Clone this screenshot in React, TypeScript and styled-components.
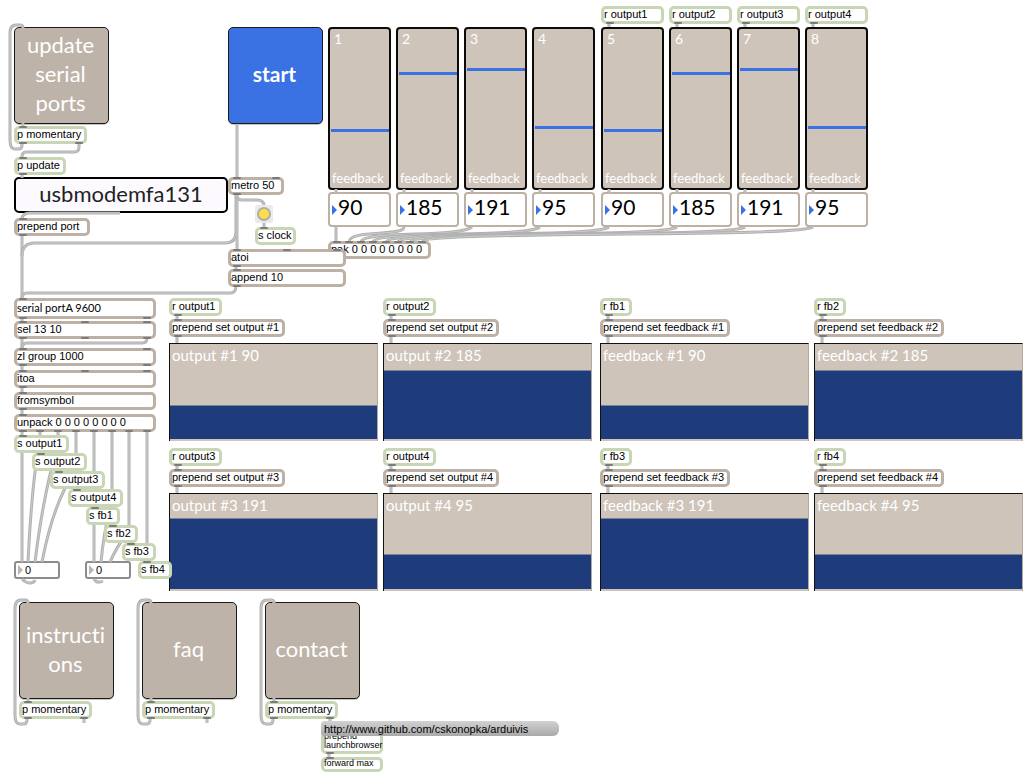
import React from "react";
import styled, { createGlobalStyle } from "styled-components";

const GlobalStyle = createGlobalStyle`
  *, *::before, *::after { box-sizing: border-box; }
  body { margin: 0; background: #fff; }
  button, input, select { font: inherit; margin: 0; }
`;

const color = {
  green: "#c9d6b5",
  taupe: "#bdb0a5",
  panel: "#cec4ba",
  button: "#beb3a9",
  blue: "#3a72e3",
  navy: "#1e3b7c",
  port: "#7b7b7b",
};

const objectFont = `"Liberation Sans", Arial, sans-serif`;
const displayFont = `Lato, "Open Sans", sans-serif`;

/* ---------- page ---------- */

const Patcher = styled.main`
  position: relative;
  display: flex;
  flex-direction: column;
  gap: 11px;
  min-height: 100vh;
  padding: 6px 9px 10px 14px;
  overflow: hidden;
  font-family: ${objectFont};
  font-size: 11px;
  font-variant-ligatures: none;
  color: #000;
`;

const Cables = styled.svg`
  position: absolute;
  top: 0;
  left: 0;
  width: 100%;
  height: 100%;
  fill: none;
  pointer-events: none;
`;

const Row = styled.section<{ $gap?: number; $indent?: number }>`
  display: flex;
  align-items: flex-start;
  gap: ${(p) => p.$gap ?? 0}px;
  padding-left: ${(p) => p.$indent ?? 0}px;
`;

const Stack = styled.div<{ $gap?: number; $indent?: number }>`
  display: flex;
  flex-direction: column;
  align-items: flex-start;
  gap: ${(p) => p.$gap ?? 0}px;
  margin-left: ${(p) => p.$indent ?? 0}px;
`;

/* ---------- object boxes ---------- */

const ObjectBox = styled.div<{ $w: number; $h: number; $tone: string }>`
  position: relative;
  display: flex;
  flex: none;
  align-items: center;
  width: ${(p) => p.$w}px;
  height: ${(p) => p.$h}px;
  padding-bottom: 2px;
  border: 3px solid ${(p) => p.$tone};
  border-radius: 5px;
  background: #fff;
  white-space: nowrap;
  line-height: 12px;
`;

const Port = styled.i<{ $at: number; $side: "in" | "out" }>`
  position: absolute;
  left: ${(p) => p.$at - 3}px;
  ${(p) => (p.$side === "in" ? "top: -3px;" : "bottom: -3px;")}
  width: 8px;
  height: 2px;
  border-radius: 1px;
  background: ${color.port};
`;

const WideText = styled.span`
  font-family: ${displayFont};
  font-size: 11px;
`;

type ObjProps = {
  w: number;
  h?: number;
  tone?: string;
  ins?: number[];
  outs?: number[];
  children: React.ReactNode;
};

function Obj({ w, h = 18, tone = color.taupe, ins = [5], outs = [5], children }: ObjProps) {
  return (
    <ObjectBox $w={w} $h={h} $tone={tone}>
      {children}
      {ins.map((at) => (
        <Port key={`i${at}`} $at={at} $side="in" />
      ))}
      {outs.map((at) => (
        <Port key={`o${at}`} $at={at} $side="out" />
      ))}
    </ObjectBox>
  );
}

/* ---------- text buttons ---------- */

const TextButton = styled.button<{ $active?: boolean }>`
  display: block;
  width: 95px;
  height: 97px;
  padding: 0 8px 4px 6px;
  border: 1px solid #1c1a19;
  border-radius: 5px;
  background: ${(p) => (p.$active ? color.blue : color.button)};
  box-shadow: 0 1px 0 #c4c4c4;
  color: #fff;
  font-family: ${displayFont};
  font-size: ${(p) => (p.$active ? 21 : 22)}px;
  font-weight: ${(p) => (p.$active ? 700 : 400)};
  line-height: 29px;
  text-align: center;
  overflow-wrap: anywhere;
`;

const MomentaryStack = styled(Stack)`
  width: 95px;
`;

function MomentaryButton({ label }: { label: string }) {
  return (
    <MomentaryStack $gap={2}>
      <TextButton type="button">{label}</TextButton>
      <Obj w={73} tone={color.green} outs={[5, 61]}>
        p momentary
      </Obj>
    </MomentaryStack>
  );
}

/* ---------- serial port and clock columns ---------- */

const PortColumn = styled.div`
  display: flex;
  flex: none;
  flex-direction: column;
  align-items: flex-start;
  gap: 13px;
  width: 214px;
  padding-top: 21px;
`;

const PortMenu = styled.select`
  display: block;
  width: 214px;
  height: 36px;
  padding: 0 0 2px;
  appearance: none;
  border: 2px solid #000;
  border-radius: 5px;
  background: #fdfaff;
  color: #222;
  font-family: ${displayFont};
  font-size: 22px;
  line-height: 30px;
  text-align: center;
  text-align-last: center;
`;

const ClockColumn = styled.div`
  position: relative;
  z-index: 1;
  display: flex;
  flex: none;
  flex-direction: column;
  align-items: flex-start;
  gap: 53px;
  width: 100px;
  padding-top: 21px;
`;

const BangButton = styled.button`
  display: flex;
  align-items: center;
  justify-content: center;
  width: 18px;
  height: 18px;
  padding: 0;
  border: 0;
  border-radius: 2px;
  background: #ebebeb;

  &::before {
    content: "";
    width: 14px;
    height: 14px;
    border: 2px solid #adadad;
    border-radius: 50%;
    background: #ffdf45;
  }
`;

const ClockBody = styled(Stack)`
  gap: 4px;
`;

/* ---------- slider channels ---------- */

const Channels = styled.div`
  display: flex;
  flex-direction: column;
  gap: 14px;
`;

const Banks = styled.div`
  display: flex;
  align-items: flex-end;
  gap: 6px;
`;

const Bank = styled.div`
  display: flex;
  gap: 5px;
`;

const Channel = styled.div`
  display: flex;
  flex-direction: column;
  gap: 3px;
  width: 63px;
`;

const Fader = styled.label`
  display: grid;
  height: 163px;
  border: 2px solid #0d0b0a;
  border-radius: 4px;
  background: ${color.panel};
  color: #fff;
  font-family: ${displayFont};
`;

const FaderName = styled.span`
  grid-area: 1 / 1;
  align-self: start;
  padding: 1px 4px;
  font-size: 14px;
  line-height: 18px;
`;

const FaderCaption = styled.span`
  grid-area: 1 / 1;
  align-self: end;
  padding: 0 2px 2px;
  font-size: 13px;
  line-height: 16px;
`;

const FaderInput = styled.input`
  grid-area: 1 / 1;
  justify-self: stretch;
  width: 58px;
  height: 156px;
  margin: 1px 0 0 1px;
  appearance: none;
  background: transparent;
  writing-mode: vertical-lr;
  direction: rtl;

  &::-webkit-slider-runnable-track {
    width: 58px;
  }
  &::-webkit-slider-thumb {
    appearance: none;
    width: 58px;
    height: 3px;
    border-radius: 0;
    background: ${color.blue};
  }
`;

const NumberField = styled.label`
  display: flex;
  align-items: center;
  gap: 1px;
  height: 35px;
  padding-left: 2px;
  border: 2px solid ${color.taupe};
  border-radius: 4px;
  background: #fff;
`;

const Arrow = styled.i<{ $tone: string }>`
  flex: none;
  border: 5px solid transparent;
  border-left-color: ${(p) => p.$tone};
  border-right-width: 0;
`;

const NumberInput = styled.input<{ $big?: boolean }>`
  flex: 1;
  min-width: 0;
  width: 100%;
  padding: 0 0 ${(p) => (p.$big ? 6 : 1)}px;
  border: 0;
  outline: 0;
  background: transparent;
  font-family: ${(p) => (p.$big ? displayFont : objectFont)};
  font-size: ${(p) => (p.$big ? 21 : 11)}px;
  color: #000;
`;

function ChannelStrip({ index, value, source }: { index: number; value: number; source?: string }) {
  return (
    <Channel>
      {source && (
        <Obj w={63} tone={color.green} ins={[]}>
          r {source}
        </Obj>
      )}
      <Stack as="div" $gap={2} style={undefined}>
        <Fader>
          <FaderName>{index}</FaderName>
          <FaderInput type="range" min={0} max={255} defaultValue={value} />
          <FaderCaption>feedback</FaderCaption>
        </Fader>
        <NumberField>
          <Arrow $tone={color.blue} />
          <NumberInput $big defaultValue={value} aria-label={`channel ${index} value`} />
        </NumberField>
      </Stack>
    </Channel>
  );
}

/* ---------- parser column ---------- */

const ParserColumn = styled(Stack)`
  flex: none;
  width: 155px;
`;

const SmallNumber = styled.label`
  display: flex;
  flex: none;
  align-items: center;
  gap: 2px;
  width: 46px;
  height: 18px;
  padding: 0 2px;
  border: 2px solid #8c8c8c;
  border-radius: 3px;
  background: #fff;
`;

/* ---------- level monitors ---------- */

const MonitorGrid = styled.div`
  display: grid;
  grid-template-columns: 209px 209px;
  gap: 7px 5px;
`;

const MonitorColumn = styled.section`
  display: flex;
  flex-direction: column;
  align-items: flex-start;
  gap: 3px;
`;

const Level = styled.div`
  display: grid;
  width: 209px;
  height: 98px;
  margin-top: 3px;
  padding-bottom: 2px;
  border: 1px solid #b3a99f;
  border-top-color: #111;
  border-left-color: #111;
  border-bottom: 0;
  background: ${color.panel};
`;

const LevelFill = styled.div`
  grid-area: 1 / 1;
  align-self: end;
  border-top: 1px solid #7c8296;
  background: ${color.navy};
`;

const LevelText = styled.span`
  grid-area: 1 / 1;
  padding: 2px;
  color: #fff;
  font-family: ${displayFont};
  font-size: 15px;
  line-height: 18px;
`;

type MonitorProps = { source: string; target: string; value: number; wide?: boolean };

function Monitor({ source, target, value, wide }: MonitorProps) {
  return (
    <MonitorColumn>
      <Obj w={wide ? 32 : 53} tone={color.green} ins={[]}>
        r {source}
      </Obj>
      <Obj w={wide ? 130 : 116}>prepend set {target}</Obj>
      <Level>
        <LevelFill style={{ height: `${(value / 255) * 100}%` }} />
        <LevelText>
          {target} {value}
        </LevelText>
      </Level>
    </MonitorColumn>
  );
}

/* ---------- link message and launcher ---------- */

const Launcher = styled.div`
  position: relative;
  display: flex;
  flex-direction: column;
  gap: 3px;
  margin-left: 56px;
`;

const LinkMessage = styled.a`
  position: absolute;
  top: -9px;
  left: 0;
  width: 238px;
  height: 15px;
  padding: 1px 3px 0;
  border-radius: 4px 6px 6px 4px;
  overflow: hidden;
  background: linear-gradient(#d2d2d2, #a9a9a9);
  color: #000;
  font-size: 11px;
  line-height: 14px;
  text-decoration: none;
`;

const SmallText = styled.span`
  font-size: 9px;
  line-height: 9px;
`;

/* ---------- cables ---------- */

const values = [90, 185, 191, 95];

const loop = (x: number, y: number) =>
  `M${x + 8} ${y + 117} v1 q0 4 -4 4 h-3 q-5 0 -5 -9 V${y + 6} q0 -8 6 -8 h4 q3 0 3 3`;

const packCables = [404, 472, 540, 609, 677, 745, 813].map((x, i) => {
  const end = [349, 361, 373, 386, 398, 410, 422][i];
  return i < 1
    ? `M${x} 227 C${x} 237 ${end} 229 ${end} 242`
    : `M${x} 227 C${x - 14} 238 ${end + 2} 230 ${end} 242`;
});

const cables = [
  loop(14, 27),
  loop(19, 602),
  loop(142, 602),
  loop(265, 602),
  "M23 123 V127",
  "M28 698 V702",
  "M151 698 V702",
  "M274 698 V702",
  "M84 718 V723",
  "M207 718 V723",
  "M330 718 V723",
  "M79 143 v4 q0 5 -5 5 H26 q-4 0 -4 5",
  "M22 174 V178",
  "M120 213 H30 q-8 0 -8 6",
  "M22 235 V299",
  "M237 124 V178",
  "M236 194 V232 q0 11 -11 11 H35 q-13 0 -13 13",
  "M237 194 V250",
  "M237 195 q0 5 5 5 h15 q7 0 7 6",
  "M264 222 V228",
  "M236 266 V270",
  "M236 286 q0 7 -6 7 H27 q-5 0 -5 5",
  "M22 318 V322",
  "M22 338 V349",
  "M147 338 q0 5 -5 5 H27 q-5 0 -5 5",
  "M22 365 V371",
  "M22 387 V393",
  "M22 409 V416",
  "M22 432 V562",
  "M40 432 V440 Q32 480 28 562",
  "M58 432 V445 Q44 490 35 562",
  "M76 432 V470 Q54 500 42 562",
  "M94 432 V562",
  "M112 432 V500 Q104 530 101 562",
  "M129 432 V530 Q116 548 110 562",
  "M147 432 V563",
  "M22 579 q4 4 8 4 q4 0 5 -3",
  "M94 579 q3 5 9 2",
  "M336 189 V193 M404 189 V193 M472 189 V193 M540 189 V193",
  "M609 189 V193 M677 189 V193 M745 189 V193 M813 189 V193",
  "M609 23 V27 M677 23 V27 M745 23 V27 M813 23 V27",
  "M336 227 V242",
  ...packCables,
  ...[177, 391, 608, 822].flatMap((x) =>
    [0, 150].map((dy) => `M${x} ${315 + dy} V${320 + dy} M${x} ${336 + dy} V${343 + dy}`)
  ),
  "M329 753 V758",
];

const unpackOuts = [5, 22, 40, 58, 76, 94, 111, 129];
const pakIns = [5, 17, 29, 41, 54, 66, 78, 90];
const sends = ["output1", "output2", "output3", "output4", "fb1", "fb2", "fb3"];

const converters = [
  { text: "zl group 1000", ins: [5, 129], outs: [5, 129] },
  { text: "itoa", ins: [5, 67, 129], outs: [5] },
  { text: "fromsymbol", ins: [5], outs: [5] },
  { text: "unpack 0 0 0 0 0 0 0 0", ins: [5], outs: unpackOuts },
];

function NumberReadout({ label }: { label: string }) {
  return (
    <SmallNumber>
      <Arrow $tone="#b5b5b5" />
      <NumberInput defaultValue="0" aria-label={label} />
    </SmallNumber>
  );
}

export default function App() {
  return (
    <>
      <GlobalStyle />
      <Patcher>
        <Cables aria-hidden="true">
          {cables.map((d, i) => (
            <g key={i}>
              <path d={d} stroke="#b0b0b0" strokeWidth="3" />
              <path d={d} stroke="#cccccc" strokeWidth="1" />
            </g>
          ))}
        </Cables>

        <Row>
          <PortColumn>
            <MomentaryButton label="update serial ports" />
            <Stack $gap={5}>
              <Stack $gap={2}>
                <Obj w={52} tone={color.green}>p update</Obj>
                <PortMenu aria-label="serial port">
                  <option>usbmodemfa131</option>
                </PortMenu>
              </Stack>
              <Obj w={76}>prepend port</Obj>
            </Stack>
          </PortColumn>

          <ClockColumn>
            <TextButton type="button" $active>start</TextButton>
            <ClockBody>
              <Stack $gap={10}>
                <Obj w={56} ins={[5, 44]}>metro 50</Obj>
                <Stack $gap={4} $indent={27}>
                  <BangButton type="button" aria-label="bang" />
                  <Obj w={41} tone={color.green} outs={[]}>s clock</Obj>
                </Stack>
              </Stack>
              <Stack $gap={2}>
                <Obj w={118} ins={[5, 55, 105]}>atoi</Obj>
                <Obj w={118}>append 10</Obj>
              </Stack>
            </ClockBody>
          </ClockColumn>

          <Channels>
            <Banks>
              <Bank>
                {values.map((v, i) => (
                  <ChannelStrip key={i} index={i + 1} value={v} />
                ))}
              </Bank>
              <Bank>
                {values.map((v, i) => (
                  <ChannelStrip key={i} index={i + 5} value={v} source={`output${i + 1}`} />
                ))}
              </Bank>
            </Banks>
            <Obj w={103} ins={pakIns} outs={[]}>pak 0 0 0 0 0 0 0 0</Obj>
          </Channels>
        </Row>

        <Row>
          <ParserColumn $gap={3}>
            <Stack $gap={9}>
              <Stack $gap={2}>
                <Obj w={142} h={21} outs={[5, 129]}>
                  <WideText>serial portA 9600</WideText>
                </Obj>
                <Obj w={142} ins={[5, 67, 129]} outs={[5, 67, 129]}>sel 13 10</Obj>
              </Stack>
              <Stack $gap={4}>
                {converters.map((o) => (
                  <Obj key={o.text} w={142} ins={o.ins} outs={o.outs}>{o.text}</Obj>
                ))}
              </Stack>
            </Stack>
            <Stack>
              {sends.map((name, i) => (
                <Stack key={name} $indent={i * 18}>
                  <Obj w={name.startsWith("fb") ? 34 : 55} tone={color.green} outs={[]}>s {name}</Obj>
                </Stack>
              ))}
              <Row as="div" $gap={7}>
                <Row as="div" $gap={25}>
                  <NumberReadout label="output monitor" />
                  <NumberReadout label="feedback monitor" />
                </Row>
                <Obj w={34} tone={color.green} outs={[]}>s fb4</Obj>
              </Row>
            </Stack>
          </ParserColumn>

          <Row as="div" $gap={8}>
            <MonitorGrid>
              {values.map((v, i) => (
                <Monitor key={i} source={`output${i + 1}`} target={`output #${i + 1}`} value={v} />
              ))}
            </MonitorGrid>
            <MonitorGrid>
              {values.map((v, i) => (
                <Monitor key={i} wide source={`fb${i + 1}`} target={`feedback #${i + 1}`} value={v} />
              ))}
            </MonitorGrid>
          </Row>
        </Row>

        <Row $gap={28} $indent={5}>
          <MomentaryButton label="instructions" />
          <MomentaryButton label="faq" />
          <Stack $gap={11}>
            <MomentaryButton label="contact" />
            <Launcher>
              <Obj w={62} h={24} tone={color.green}>
                <SmallText>
                  prepend
                  <br />
                  launchbrowser
                </SmallText>
              </Obj>
              <Obj w={62} h={15} tone={color.green} outs={[]}>
                <SmallText>forward max</SmallText>
              </Obj>
              <LinkMessage href="http://www.github.com/cskonopka/arduivis">
                http://www.github.com/cskonopka/arduivis
              </LinkMessage>
            </Launcher>
          </Stack>
        </Row>
      </Patcher>
    </>
  );
}
